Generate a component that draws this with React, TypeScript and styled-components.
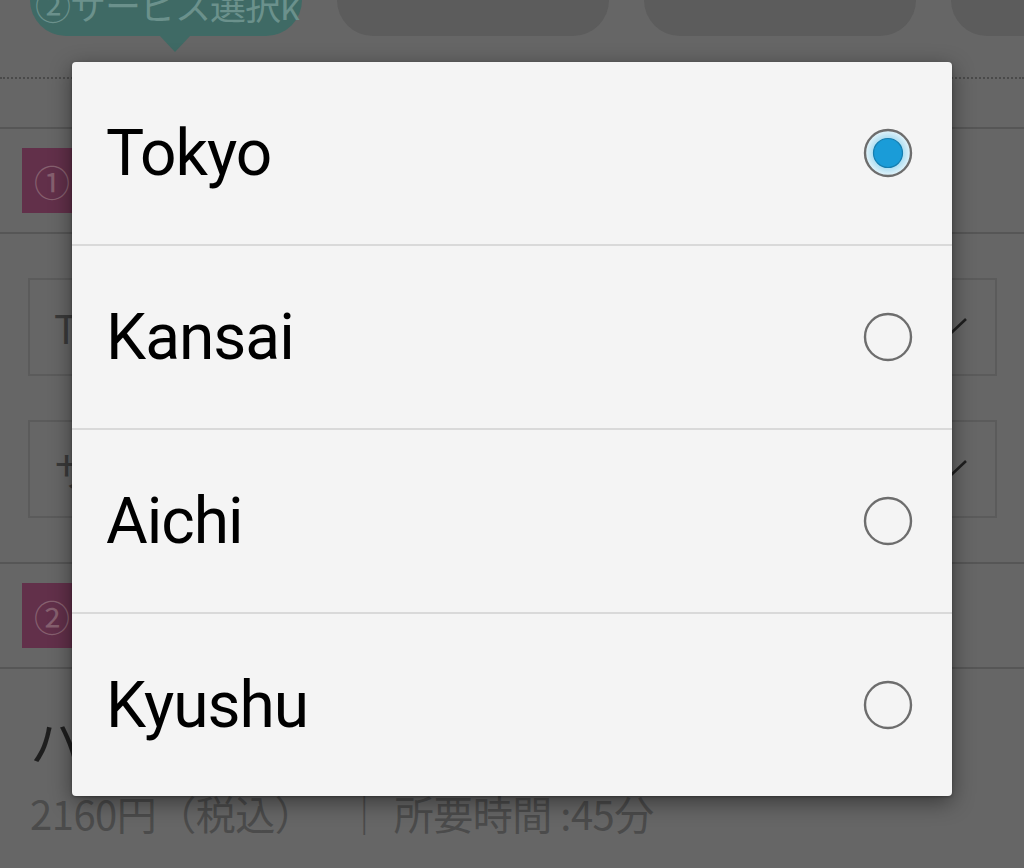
import React from "react";
import styled, { createGlobalStyle } from "styled-components";

const Global = createGlobalStyle`
  html, body { margin: 0; padding: 0; background: #666666; }
  body { font-family: "Noto Sans CJK JP", "Noto Sans", sans-serif; }
`;

const Screen = styled.div`
  position: relative;
  width: 1024px;
  height: 868px;
  overflow: hidden;
  background: #666666;
`;

const Page = styled.div`
  display: flex;
  flex-direction: column;
`;

const TabBar = styled.div`
  display: flex;
  gap: 35px;
  padding-left: 30px;
  margin-top: -34px;
  height: 70px;
`;

const Tab = styled.div<{ $active?: boolean }>`
  position: relative;
  flex: 0 0 272px;
  height: 70px;
  border-radius: 0 0 36px 36px;
  background: ${(p) => (p.$active ? "#3f6a65" : "#5c5c5c")};
  color: #6b918c;
  font-size: 36px;
  line-height: 36px;
  padding: 29px 0 0 5px;
  box-sizing: border-box;
  white-space: nowrap;
  &::after {
    content: ${(p) => (p.$active ? '""' : "none")};
    position: absolute;
    left: 130px;
    bottom: -16px;
    border-left: 15px solid transparent;
    border-right: 15px solid transparent;
    border-top: 16px solid #3f6a65;
  }
`;

const TabText = styled.span`
  display: block;
  margin-top: -9px;
  letter-spacing: -1px;
`;

const DottedRule = styled.div`
  margin-top: 41px;
  border-top: 2px dotted #4a4a4a;
`;

const Rule = styled.div<{ $gap?: number }>`
  margin-top: ${(p) => p.$gap ?? 0}px;
  height: 2px;
  background: #565656;
`;

const SectionHead = styled.div`
  height: 103px;
  display: flex;
  align-items: center;
  padding-left: 22px;
`;

const SectionBadge = styled.div`
  width: 110px;
  height: 65px;
  background: #62304a;
  color: #86606f;
  font-size: 36px;
  display: flex;
  align-items: center;
  padding-left: 12px;
  box-sizing: border-box;
`;

const Fields = styled.div`
  display: flex;
  flex-direction: column;
  gap: 44px;
  padding: 44px 27px 44px 28px;
`;

const SelectBox = styled.div`
  height: 98px;
  border: 2px solid #5b5b5b;
  box-sizing: border-box;
  display: flex;
  align-items: center;
  justify-content: space-between;
  padding: 0 26px 0 24px;
  font-size: 40px;
  color: #3a3a3a;
`;

const Service = styled.div`
  padding: 42px 0 0 30px;
  display: flex;
  flex-direction: column;
  gap: 18px;
`;

const ServiceTitle = styled.div`
  font-size: 52px;
  line-height: 60px;
  color: #1e1e1e;
`;

const ServiceMeta = styled.div`
  font-size: 40px;
  line-height: 48px;
  color: #4b4b4b;
  display: flex;
  align-items: center;
  letter-spacing: -0.5px;
`;

const MetaBar = styled.span`
  margin: 0 10px 0 30px;
`;

const Dialog = styled.div`
  position: absolute;
  left: 72px;
  top: 62px;
  width: 880px;
  height: 734px;
  background: #f4f4f4;
  border-radius: 4px;
  box-shadow: 0 6px 22px rgba(0, 0, 0, 0.45), 0 1px 3px rgba(0, 0, 0, 0.3);
  display: flex;
  flex-direction: column;
  overflow: hidden;
`;

const Option = styled.div`
  flex: 1;
  display: flex;
  align-items: center;
  justify-content: space-between;
  padding: 0 38px 0 34px;
  font-family: Roboto, "Noto Sans", sans-serif;
  font-size: 64px;
  letter-spacing: -1px;
  color: #000;
  & + & {
    border-top: 2px solid #d9d9d9;
  }
`;

const Chevron = () => (
  <svg width="40" height="22" viewBox="0 0 40 22">
    <path d="M3 3 L20 19 L37 3" fill="none" stroke="#1f1f1f" strokeWidth="2.6" />
  </svg>
);

const Radio = ({ checked }: { checked?: boolean }) => (
  <svg width="52" height="52" viewBox="0 0 52 52">
    <defs>
      <radialGradient id="halo" cx="50%" cy="50%" r="50%">
        <stop offset="55%" stopColor="#9fd8ef" />
        <stop offset="100%" stopColor="#e6f5fb" />
      </radialGradient>
    </defs>
    <circle cx="26" cy="26" r="23" fill={checked ? "url(#halo)" : "#f4f4f4"} stroke="#6d6d6d" strokeWidth="2.4" />
    {checked && <circle cx="26" cy="26" r="14.5" fill="#1a9cd8" stroke="#157eb0" strokeWidth="1.2" />}
  </svg>
);

const regions = ["Tokyo", "Kansai", "Aichi", "Kyushu"];

export default function App() {
  return (
    <Screen>
      <Global />
      <Page>
        <TabBar>
          <Tab $active>
            <TabText>②サービス選択k</TabText>
          </Tab>
          <Tab />
          <Tab />
          <Tab />
        </TabBar>
        <DottedRule />
        <Rule $gap={48} />
        <SectionHead>
          <SectionBadge>①</SectionBadge>
        </SectionHead>
        <Rule />
        <Fields>
          <SelectBox>
            <span>Tokyo</span>
            <Chevron />
          </SelectBox>
          <SelectBox>
            <span>サービス</span>
            <Chevron />
          </SelectBox>
        </Fields>
        <Rule />
        <SectionHead>
          <SectionBadge>②</SectionBadge>
        </SectionHead>
        <Rule />
        <Service>
          <ServiceTitle>ハイライトカラー</ServiceTitle>
          <ServiceMeta>
            <span>2160円（税込）</span>
            <MetaBar>｜</MetaBar>
            <span>所要時間 :45分</span>
          </ServiceMeta>
        </Service>
      </Page>
      <Dialog>
        {regions.map((r, i) => (
          <Option key={r}>
            <span>{r}</span>
            <Radio checked={i === 0} />
          </Option>
        ))}
      </Dialog>
    </Screen>
  );
}
